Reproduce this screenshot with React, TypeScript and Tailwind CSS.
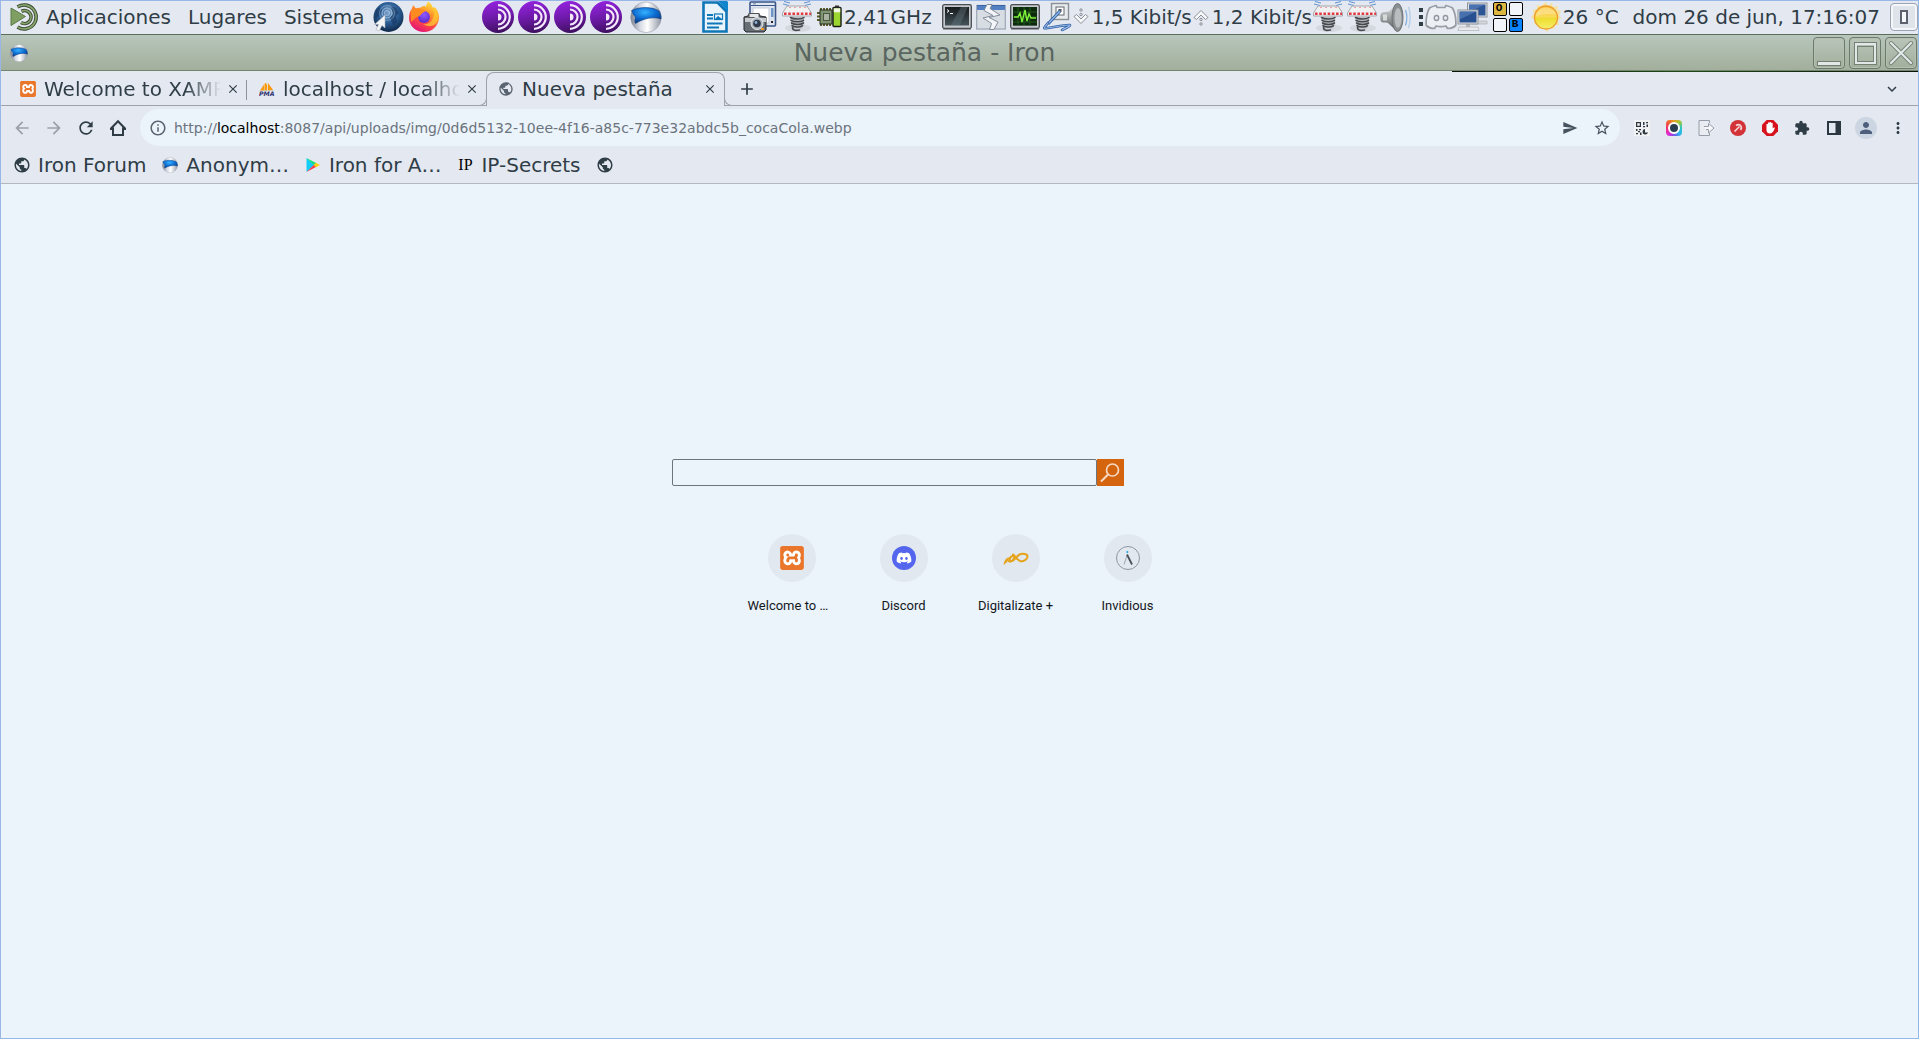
import type { ReactNode } from "react";
import {
  MdAdd,
  MdArrowBack,
  MdArrowForward,
  MdClose,
  MdExtension,
  MdInfoOutline,
  MdKeyboardArrowDown,
  MdMoreVert,
  MdPerson,
  MdPublic,
  MdRefresh,
  MdSend,
  MdStarBorder,
} from "react-icons/md";
import { SiXampp } from "react-icons/si";
import { FaDiscord } from "react-icons/fa";

/* ---------- panel icons ---------- */

function MateLogo() {
  return (
    <svg width="30" height="30" viewBox="0 0 30 30" fill="none">
      <path d="M6.500 5A12 12 0 1 1 6.500 25" transform="translate(1 0)" stroke="#3c4a36" strokeWidth="3.600" />
      <path d="M6.500 5A12 12 0 1 1 6.500 25" transform="translate(1 0)" stroke="#87a56b" strokeWidth="1.700" />
      <path d="M11.500 9.300A6.500 6.500 0 1 1 11 20.500" stroke="#3c4a36" strokeWidth="3.600" />
      <path d="M11.500 9.300A6.500 6.500 0 1 1 11 20.500" stroke="#87a56b" strokeWidth="1.700" />
      <path d="M1 6l14.500 8.500L1 23.500z" fill="#7f9f62" stroke="#5d7a48" />
    </svg>
  );
}

function WebCursor() {
  return (
    <svg width="32" height="32" viewBox="0 0 32 32" fill="none">
      <defs>
        <radialGradient id="web" cx=".5" cy=".35" r=".65">
          <stop offset="0" stopColor="#7ba3cc" />
          <stop offset=".5" stopColor="#2c5f96" />
          <stop offset="1" stopColor="#0d2748" />
        </radialGradient>
      </defs>
      <circle cx="16.500" cy="16" r="15" fill="url(#web)" />
      <path d="M19 5l5 2 3 5-3 3 1 6-4 3-3-7 3-4zM4 9l4-3 2 4-3 5-4 2z" fill="#16365f" opacity=".6" />
      <g stroke="#c4daf0" opacity=".6">
        <circle cx="15" cy="12" r="2.500" />
        <circle cx="15" cy="12" r="5" />
        <circle cx="15" cy="12" r="7.500" opacity=".6" />
      </g>
      <path d="M13 14v13l-3-2.500-3 5.500-3-1.500 2.500-5H2.500z" fill="#f3f4f6" stroke="#a9afb8" strokeWidth=".6" />
    </svg>
  );
}

function Firefox() {
  return (
    <svg width="32" height="32" viewBox="0 0 32 32">
      <defs>
        <linearGradient id="ff1" x1=".8" y1="0" x2=".3" y2="1">
          <stop offset="0" stopColor="#fff04a" />
          <stop offset=".35" stopColor="#ff9a28" />
          <stop offset=".65" stopColor="#ff4a45" />
          <stop offset="1" stopColor="#e0107a" />
        </linearGradient>
        <radialGradient id="ff2" cx=".5" cy=".3" r=".7">
          <stop offset="0" stopColor="#9059ff" />
          <stop offset="1" stopColor="#592acb" />
        </radialGradient>
      </defs>
      <path d="M20 .5c3 2 4 4 4.500 6 1.500.2 2.500-.5 3 .5 2.500 3 3.700 6 3.500 10-.5 8-7 14-15 14S1 25 1 17C1 13 2 10 4 7.500L5 4l3 3.500c1-.6 3-.8 4-.5 1.500-1.500 3-2 4.500-2.500l1 1.500z" fill="url(#ff1)" />
      <circle cx="16" cy="16" r="6" fill="url(#ff2)" />
      <path d="M3 9l5-1.500c2.500.3 4.500.5 5.500 2 2-.5 4-.3 4 0-.6 1.400-3 2-4 3.500-1.500 2-4 3.500-5 3L3 21z" fill="#ff8a20" />
      <path d="M20 1c5 5 8 10 5 16-2 5-6 7-10 6 6 4 13 2 15-4 1-5-1-10-5-12C24 4 22 2 20 1z" fill="#ffc832" opacity=".75" />
    </svg>
  );
}

function Tor() {
  return (
    <svg width="32" height="32" viewBox="0 0 32 32" fill="none">
      <defs>
        <linearGradient id="tor" x1=".4" y1="0" x2=".6" y2="1">
          <stop offset="0" stopColor="#9322dd" />
          <stop offset=".5" stopColor="#6d1aa8" />
          <stop offset="1" stopColor="#3c0f5c" />
        </linearGradient>
      </defs>
      <circle cx="16" cy="16" r="16" fill="url(#tor)" />
      <g stroke="#f4e8fb" strokeWidth="2.200">
        <path d="M16 4.200a11.800 11.800 0 0 1 0 23.600" />
        <path d="M16 8.500a7.500 7.500 0 0 1 0 15" />
      </g>
      <path d="M16 12.500a3.500 3.500 0 0 1 0 7z" fill="#f4e8fb" />
    </svg>
  );
}

function IronBall({ size }: { size: number }) {
  return (
    <svg width={size} height={size} viewBox="0 0 32 32">
      <defs>
        <linearGradient id="ironG" x1="0" y1="0" x2="1" y2="0">
          <stop offset="0" stopColor="#7d838f" />
          <stop offset=".3" stopColor="#d5d9e2" />
          <stop offset=".55" stopColor="#ffffff" />
          <stop offset="1" stopColor="#8f96a4" />
        </linearGradient>
        <radialGradient id="ironB" cx=".45" cy=".3" r=".7">
          <stop offset="0" stopColor="#35b1ff" />
          <stop offset=".55" stopColor="#0c6bd0" />
          <stop offset="1" stopColor="#0a3c86" />
        </radialGradient>
      </defs>
      <circle cx="16" cy="16.300" r="15.300" fill="url(#ironG)" stroke="#8c93a1" strokeWidth=".5" />
      <path d="M1.500 9.500C9 5.500 23 5.500 29 10c1.500 2.500 2.200 5 2 8-7-2.500-17-1-25.500 4.500-1.500-2-.2-4.500 0-6.500C4 14.500 2.500 12 1.500 9.500z" fill="url(#ironB)" stroke="#123f7c" strokeWidth=".6" />
    </svg>
  );
}

function Writer() {
  return (
    <svg width="28" height="32" viewBox="0 0 28 32" fill="none">
      <path d="M2.500 1.500h14l9 9v20h-23z" fill="#e9f4fc" stroke="#0f76b8" strokeWidth="2.600" />
      <path d="M17 0l10 11V1c-1-1-1-1-2-1z" fill="#1286cc" />
      <path d="M6 14h6M6 17.500h6M6 22.500h15.500M6 26.500h12" stroke="#0f76b8" strokeWidth="2" />
      <rect x="13.500" y="13" width="8" height="5.500" stroke="#0f76b8" strokeWidth="1.200" />
      <path d="M14 18l3-3 4 3z" fill="#0f76b8" />
    </svg>
  );
}

function Screenshot() {
  return (
    <svg width="34" height="32" viewBox="0 0 34 32" fill="none">
      <rect x="7" y="1" width="25.500" height="24" rx="1" fill="#dfe5ef" stroke="#3b5687" strokeWidth="1.600" />
      <path d="M8 4.500h24" stroke="#3b5687" />
      <path d="M10 2.800h3" stroke="#778aa9" />
      <rect x="10" y="7" width="16" height="15" fill="#fff" stroke="#c5ccd8" />
      <rect x="28" y="7" width="2.500" height="9" fill="#6e95c8" />
      <path d="M29 20v2" stroke="#222" strokeWidth="2" />
      <path d="M1 16l4-1 1-2h10l1 2 6 1v13l-2 2H3l-2-2z" fill="#686e75" stroke="#25292d" />
      <path d="M2 17h21v4H2z" fill="#c6cacf" />
      <rect x="6" y="12.500" width="10" height="4" fill="#e4e8eb" stroke="#555" />
      <circle cx="14" cy="22.500" r="6" fill="#aeb5bd" stroke="#e8edf0" />
      <circle cx="14" cy="22.500" r="3.800" fill="#2f3b4b" />
      <circle cx="13" cy="21.500" r="1.400" fill="#8fb2da" />
      <path d="M18 28h3" stroke="#ef9b2a" strokeWidth="2" />
    </svg>
  );
}

function Spring() {
  return (
    <svg width="32" height="32" viewBox="0 0 32 32" fill="none">
      <ellipse cx="17" cy="27" rx="13" ry="4" fill="#c9cdd3" opacity=".6" />
      <path d="M3 .5l6 1.500M2 3l6 1.500M29 .5l-6 1.500M30 3l-6 1.500" stroke="#5f92cf" />
      <path d="M6 5h20l4.500 7v3H1.500v-3z" fill="#f1f1f2" stroke="#a5a8ad" />
      <path d="M3 12.800h27" stroke="#e03a44" strokeWidth="2.400" strokeDasharray="2.600 1.600" />
      <path d="M8 6.500h18" stroke="#eca3a8" strokeDasharray="2 3" />
      <path d="M10 15.500h13v7l-2 5H12l-2-5z" fill="#b9bdc1" />
      <g stroke="#45494d" strokeWidth="1.600" strokeLinecap="round">
        <path d="M9.500 16.500c3 2 11 2 13.500 0" />
        <path d="M10 19.300c3 2 10 2 12.500 0" />
        <path d="M10.500 22c3 2 9 2 12 0" />
        <path d="M11 24.700c3 1.800 8 1.800 10.500 0" />
        <path d="M11.500 26.500c0 3.500 4 3 7 2.500" />
      </g>
    </svg>
  );
}

function Cpu() {
  return (
    <svg width="25" height="24" viewBox="0 0 25 24" fill="none">
      <path d="M4 3v18M7 3v18M10 3v18M13 3v18M0 8h4M0 11.500h4M0 15h4" stroke="#5a5c2a" strokeWidth="2" />
      <rect x="3" y="5" width="12" height="14" fill="#7f9470" stroke="#2a3023" />
      <rect x="6.500" y="8.500" width="6" height="7" fill="#a9b39f" stroke="#4b5544" />
      <rect x="16" y="2.500" width="8" height="19" rx="1" fill="#9bd52f" stroke="#161a12" strokeWidth="1.400" />
      <path d="M16.800 3.300h6.400v4h-6.400z" fill="#f1f7e2" />
      <path d="M18 1.500h4" stroke="#333" strokeWidth="2" />
    </svg>
  );
}

function Screen({ children }: { children: ReactNode }) {
  return (
    <svg width="30" height="26" viewBox="0 0 30 26" fill="none">
      <defs>
        <linearGradient id="scr" x1="0" y1="0" x2="0" y2="1">
          <stop offset="0" stopColor="#16191c" />
          <stop offset="1" stopColor="#44545a" />
        </linearGradient>
      </defs>
      <rect x="1" y="24" width="28" height="2" fill="#9da0a6" />
      <rect x=".7" y=".7" width="28.600" height="23.600" rx="1.500" fill="#c5c8cc" stroke="#494d52" strokeWidth="1.300" />
      <rect x="3" y="3" width="24" height="18.500" fill="url(#scr)" />
      {children}
    </svg>
  );
}

function TornWindow() {
  return (
    <svg width="30" height="26" viewBox="0 0 30 26" fill="none">
      <rect x=".7" y="1.500" width="28.600" height="23.500" fill="#d8dde4" stroke="#9ca5b4" strokeWidth="1.200" />
      <rect x="1" y="1.500" width="28" height="4.500" fill="#5380c2" />
      <path d="M1 1.500h28" stroke="#3a63a6" />
      <path d="M11 .5L8 6.500l9 5-10 2.500 8.500 5.500-2 6h4.500l4-7.500-9-4.500 11-2.500-10-6.500 2-4z" fill="#f3f5f9" stroke="#858d9a" />
    </svg>
  );
}

function Plug() {
  return (
    <svg width="30" height="31" viewBox="0 0 30 31" fill="none">
      <rect x="9.500" y="2.500" width="17" height="16" fill="#e8ebee" stroke="#8b9097" strokeWidth="1.400" />
      <rect x="14" y="6" width="8" height="8" fill="#fff" stroke="#62676d" />
      <rect x="16.500" y="8" width="3" height="3" fill="#53575c" />
      <path d="M18 10L6 23" stroke="#2f5ea3" strokeWidth="3.200" />
      <path d="M18 10L6 23" stroke="#8db5e4" strokeWidth="1.400" />
      <path d="M6 22C2 27 0 28 6 27c7-1 16-3 21-3 3 0-1 2-7 5" stroke="#2f5ea3" strokeWidth="2.600" strokeLinecap="round" />
      <path d="M6 22C2 27 0 28 6 27c7-1 16-3 21-3 3 0-1 2-7 5" stroke="#92b8e6" strokeWidth="1.200" strokeLinecap="round" />
    </svg>
  );
}

function NetArrow({ up }: { up?: boolean }) {
  return (
    <svg width="16" height="18" viewBox="0 0 16 18" fill="none" stroke="#8b9097">
      <g transform={up ? "rotate(180 8 9)" : undefined}>
        <path d="M1 8.500L3.500 6.500 8 11l4.500-4.500L15 8.500l-7 7z" fill="#f7f8fa" />
        <circle cx="8" cy="2" r="1.200" />
        <circle cx="8" cy="6.500" r="1.200" />
      </g>
    </svg>
  );
}

function Speaker() {
  return (
    <svg width="32" height="32" viewBox="0 0 32 32" fill="none">
      <defs>
        <linearGradient id="spk" x1="0" y1="0" x2="0" y2="1">
          <stop offset="0" stopColor="#e2e5e6" />
          <stop offset=".5" stopColor="#9da2a3" />
          <stop offset="1" stopColor="#505455" />
        </linearGradient>
      </defs>
      <path d="M1 12.500c1-1.500 6-1.500 8-2L17 2.500v28L8 22c-2-.5-6 0-7-1.500-1-2-1-6 0-8z" fill="url(#spk)" />
      <ellipse cx="17.500" cy="16.500" rx="5.500" ry="14" fill="#8b9092" stroke="#6d7173" />
      <ellipse cx="18" cy="17" rx="3.500" ry="10" fill="#b9bdbf" />
      <path d="M3 13.500h4v6H3z" fill="#e5e8e9" opacity=".8" />
      <path d="M25.500 9c1.500 4 1.500 11 0 15.500" stroke="#86b0de" strokeWidth="1.300" />
      <path d="M28.500 6c2.200 6 2.200 15 0 21" stroke="#b2cdea" strokeWidth="1.300" />
    </svg>
  );
}

function PanelDiscord() {
  return (
    <svg width="32" height="26" viewBox="0 0 32 26" fill="none">
      <path d="M11 1.500C7 2.500 4.500 4 4.500 4 1.500 9.500.8 15 1.200 21.500 4 24 7.500 24.500 9.500 24.500l1.500-2.500c3 .8 7 .8 10 0l1.500 2.500c2 0 5.500-.5 8.300-3C31.200 15 30.500 9.500 27.500 4c0 0-2.500-1.500-6.500-2.500l-1.200 2h-7.600z" fill="#eceff4" stroke="#989ca4" strokeWidth="1.700" strokeLinejoin="round" />
      <ellipse cx="11.500" cy="14" rx="2.200" ry="2.500" stroke="#92969f" strokeWidth="1.400" />
      <ellipse cx="20.500" cy="14" rx="2.200" ry="2.500" stroke="#92969f" strokeWidth="1.400" />
    </svg>
  );
}

function NetworkPcs() {
  return (
    <svg width="32" height="30" viewBox="0 0 32 30" fill="none">
      <path d="M14 19h16v3H14z" fill="#d3d6da" stroke="#a5a8ac" strokeWidth=".6" />
      <rect x="10.500" y="1" width="19.500" height="14" fill="#dfe2e6" stroke="#8e939a" />
      <rect x="12" y="2.500" width="16.500" height="11" fill="#2c5596" />
      <path d="M12 2.500h16.500L12 10z" fill="#5e86bf" opacity=".6" />
      <path d="M9 21h4v4H9z" fill="#b5b9be" />
      <path d="M2 25h19l1 3.500H1z" fill="#e7e9eb" stroke="#a5a8ac" strokeWidth=".6" />
      <rect x="1" y="8" width="20" height="14" fill="#dfe2e6" stroke="#8e939a" />
      <rect x="2.500" y="9.500" width="17" height="11" fill="#26508f" />
      <path d="M2.500 9.500h17l-17 8z" fill="#5e86bf" opacity=".6" />
    </svg>
  );
}

function Sun() {
  return (
    <svg width="30" height="30" viewBox="0 0 30 30">
      <defs>
        <linearGradient id="sun" x1="0" y1="0" x2="0" y2="1">
          <stop offset="0" stopColor="#f8ba2b" />
          <stop offset=".45" stopColor="#fbd95a" />
          <stop offset=".55" stopColor="#eedd30" />
          <stop offset="1" stopColor="#f6f06a" />
        </linearGradient>
      </defs>
      <path d="M15 0l2 4 4-3 1 4 5-1-1 4 4 1-2 4 2 3-3 2 1 5-4 0-1 4-4-1-3 4-3-4-5 1-1-4-4-1 1-4-4-3 3-3-1-4 4-1 0-4 4 1z" fill="#f8df8c" opacity=".85" />
      <circle cx="15" cy="15.500" r="11.500" fill="url(#sun)" stroke="#eb9d33" strokeWidth="1.300" />
      <path d="M5 14C6 8 10 5.500 15 5.500s9 3 10 7c-5-1-13-1-20 1.500z" fill="#fdeaa6" opacity=".6" />
    </svg>
  );
}

/* ---------- browser icons ---------- */

function PhpMyAdmin() {
  return (
    <svg width="18" height="18" viewBox="0 0 18 18">
      <path d="M1 11L6 3.500V11zM6.500 11V2.500C9 1 9.500 6 9 11zM10 11V2l6 8.500z" fill="#f89c0e" />
      <path d="M1 11l15-.5v.8H1z" fill="#c9cbd3" />
      <text x="0" y="17" fontFamily="DejaVu Sans" fontSize="7" fontWeight="bold" fontStyle="italic" fill="#2f3470">
        PMA
      </text>
    </svg>
  );
}

function HomeIcon() {
  return (
    <svg width="18" height="18" viewBox="0 0 18 18" fill="none" stroke="#2f3b45" strokeWidth="2">
      <path d="M1.500 10L9 2.200l7.500 7.800M4 8.500V16h10V8.500" />
      <path d="M1 10h3M14 10h3" />
    </svg>
  );
}

function PlayStore() {
  return (
    <svg width="16" height="16" viewBox="0 0 16 16">
      <path d="M1.500 1v14L9 8z" fill="#12cdf8" />
      <path d="M1.500 1l10 5.300L9 8.300z" fill="#11dd77" />
      <path d="M1.500 15l10-5.300L9 7.700z" fill="#fb3d4c" />
      <path d="M11 5.800L15 8l-4 2.200L8.700 8z" fill="#fdd012" />
    </svg>
  );
}

function QrIcon() {
  return (
    <svg width="16" height="16" viewBox="0 0 16 16" fill="#2d3740">
      <rect width="16" height="16" fill="#f1f2f4" />
      <path fillRule="evenodd" d="M2 2h5v5H2zm1.200 1.200v2.600h2.600V3.200z" />
      <path d="M9 2h1.500v3H9zM12 2h2v1.200h-2zM12.500 4.500H14V7h-1.500zM9 6h2v1.200H9zM2 9h1.500v2H2zM5 9h2v1.200H5zM4 11h2v1.200H4zM2 13h2v1.200H2zM6 12.500h1.500V15H6z" />
      <path d="M11 9a2.800 2.800 0 1 0 3 3.500h-3z" />
    </svg>
  );
}

function ColorLens() {
  return (
    <span className="flex size-4 items-center justify-center rounded-sm bg-[conic-gradient(#e9a020,#9ec93a,#28c4c4,#2bb6f0,#7a54e8,#e42bd0,#f03070,#f06030,#e9a020)]">
      <span className="flex size-3 items-center justify-center rounded-full border-2 border-white bg-[#2b3e50]" />
    </span>
  );
}

function PageArrow() {
  return (
    <svg width="17" height="16" viewBox="0 0 17 16" fill="none" stroke="#969da8">
      <path d="M11.500 3V.5H1v15h10.500V13" fill="#e9ecf0" />
      <path d="M6 6.500h4.500v-3L16 8l-5.500 5V9.500H8" fill="#f7f8f9" />
    </svg>
  );
}

function RedArrow() {
  return (
    <svg width="16" height="16" viewBox="0 0 16 16" fill="none">
      <circle cx="8" cy="8" r="8" fill="#d23338" />
      <path d="M4.500 11.500L9.500 6.500M6 5.500c1.500-1 3.500-1 4.500 0s1 3 0 4.500" stroke="#f6d6d7" strokeWidth="1.600" />
    </svg>
  );
}

function AdBlock() {
  return (
    <svg width="16" height="16" viewBox="0 0 16 16">
      <path d="M4.700 0h6.600L16 4.700v6.600L11.300 16H4.700L0 11.300V4.700z" fill="#d8121c" />
      <path d="M4.500 8.500V4.300c0-.9 1.500-.9 1.500 0V3c0-.9 1.600-.9 1.600 0v-.4c0-.9 1.600-.9 1.600 0V3.500c0-.9 1.500-.9 1.500 0v5c.6-.8 1.100-1.400 1.900-.9.500.3.200.8-.2 1.500-1 2.400-1.800 4.400-4.200 4.400C5.600 13.500 4.500 12 4.500 10z" fill="#fff" />
    </svg>
  );
}

function SidePanel() {
  return (
    <svg width="14" height="14" viewBox="0 0 14 14" fill="none">
      <rect x="1" y="1" width="12" height="12" stroke="#2b3842" strokeWidth="2" />
      <rect x="8.500" y="1" width="5" height="12" fill="#2b3842" />
    </svg>
  );
}

function Digitalizate() {
  return (
    <svg width="26" height="24" viewBox="0 0 26 24" fill="none" stroke="#e6a41d" strokeLinecap="round">
      <path d="M10 8.500c2 1 4 5.500 7 6.500 3.500 1 7.500-2 7.500-4.500S20 7 17 8.200c-2.500 1-4.500 5-7 6.300-2 1-3.500 0-3.300-1.500.3-1.800 2.500-3.500 4-3 1 .3.800 2-.5 3.300" strokeWidth="2" />
      <path d="M6.500 12C4 12 1.800 14.500 1.500 17.500c1.500-1 3-2.800 3.500-4.500 0 1.500.5 3 2.500 3" strokeWidth="1.400" />
    </svg>
  );
}

function InvidiousLogo() {
  return (
    <svg width="26" height="26" viewBox="0 0 26 26" fill="none">
      <circle cx="13" cy="13" r="11.500" stroke="#9097a0" />
      <circle cx="12.300" cy="7" r="1" fill="#1aa5e0" />
      <path d="M12.200 10L9 19.500" stroke="#a0a6ad" />
      <path d="M12 9.500l5 10" stroke="#4b5157" strokeWidth="1.800" />
    </svg>
  );
}

function XamppLogo({ large }: { large?: boolean }) {
  return (
    <span className={large ? "flex size-6 items-center justify-center rounded-xs bg-white" : "flex size-4 items-center justify-center rounded-xs bg-white"}>
      <SiXampp className="size-full text-[#e9762b]" />
    </span>
  );
}

/* ---------- pieces ---------- */

const iconButton = "flex w-8 shrink-0 items-center justify-center";

function WindowButton({ label, children }: { label: string; children: ReactNode }) {
  return (
    <button aria-label={label} className="flex size-8 items-center justify-center rounded border border-[#6b7a6c] bg-linear-to-b from-[#b9c5ba] to-[#a2af9c] shadow-[inset_0_0_0_1px_#b5c0b2]">
      {children}
    </button>
  );
}

function Tab({ icon, title, active, divider, faded }: { icon: ReactNode; title: string; active?: boolean; divider?: boolean; faded?: boolean }) {
  return (
    <div
      className={
        active
          ? "relative z-10 -mb-px flex w-[239px] items-center rounded-t-lg border border-b-0 border-[#9ea2ab] bg-[#e4e8f0] pr-1.5 pb-0.5 pl-[11px]"
          : "relative flex w-[239px] items-center pr-1.5 pl-3"
      }
    >
      {active && (
        <>
          <span className="absolute -left-2 bottom-0 size-2 rounded-br-lg border-r border-b border-[#9ea2ab] bg-[#e4e8f0]" />
          <span className="absolute -right-2 bottom-0 size-2 rounded-bl-lg border-b border-l border-[#9ea2ab] bg-[#e4e8f0]" />
        </>
      )}
      <button className="flex min-w-0 flex-1 items-center gap-2">
        <span className="flex size-4 shrink-0 items-center justify-center">{icon}</span>
        <span
          className={
            faded
              ? "flex-1 overflow-hidden text-left whitespace-nowrap [mask-image:linear-gradient(to_right,#000_80%,transparent)]"
              : "flex-1 overflow-hidden text-left whitespace-nowrap"
          }
        >
          {title}
        </span>
      </button>
      <button aria-label="Cerrar" className="ml-1 flex size-4 items-center justify-center">
        <MdClose className="size-3.5" />
      </button>
      {divider && <span className="absolute top-2 right-0 h-5 w-px bg-[#8e949d]" />}
    </div>
  );
}

function Bookmark({ icon, label }: { icon: ReactNode; label?: string }) {
  return (
    <a href="#" aria-label={label ?? "Marcador"} className="flex items-center gap-2">
      <span className="flex size-4 items-center justify-center">{icon}</span>
      {label && <span>{label}</span>}
    </a>
  );
}

function Shortcut({ icon, label }: { icon: ReactNode; label: string }) {
  return (
    <a href="#" className="flex w-28 flex-col items-center gap-4">
      <span className="flex size-12 items-center justify-center rounded-full bg-[#e1e8ef]">{icon}</span>
      <span
        className={
          label.endsWith("…")
            ? "w-22 text-left font-['Roboto',sans-serif] text-[13px] leading-4 text-[#14181c]"
            : "font-['Roboto',sans-serif] text-[13px] leading-4 text-[#14181c]"
        }
      >
        {label}
      </span>
    </a>
  );
}

export default function App() {
  return (
    <div className="flex min-h-screen flex-col border border-[#98b7e6] bg-[#ebf3fb] font-['DejaVu_Sans',sans-serif] text-xl leading-6 text-[#2f3d47]">
      {/* Desktop panel */}
      <header className="flex h-[33px] items-center overflow-hidden bg-[#e4e8f0] pb-0.5 whitespace-nowrap">
        <nav className="flex items-center gap-[17px] pl-[9px]">
          <button className="flex items-center gap-1.5">
            <MateLogo />
            Aplicaciones
          </button>
          <button>Lugares</button>
          <button>Sistema</button>
        </nav>
        <div className="ml-2 flex items-center gap-1">
          <button aria-label="Navegador"><WebCursor /></button>
          <button aria-label="Firefox"><Firefox /></button>
        </div>
        <div className="ml-[42px] flex items-center gap-1">
          {[1, 2, 3, 4].map((n) => (
            <button key={n} aria-label={`Tor Browser ${n}`}><Tor /></button>
          ))}
          <button aria-label="Iron" className="ml-1"><IronBall size={32} /></button>
        </div>

        <div className="ml-auto flex items-center">
          <button aria-label="Writer" className="mr-3.5"><Writer /></button>
          <button aria-label="Captura de pantalla" className="mr-1"><Screenshot /></button>
          <button aria-label="Montar disco" className="mr-1"><Spring /></button>
          <Cpu />
          <span className="ml-0.5">2,41</span>
          <span className="ml-0.5">GHz</span>
          <div className="ml-2.5 flex items-center gap-1">
            <button aria-label="Terminal">
              <Screen>
                <path d="M19 3h7l-8 18h-9z" fill="#6a7b82" opacity=".4" />
                <path d="M5 5.500l2 1.500-2 1.500M8 9.500h3" stroke="#fff" />
              </Screen>
            </button>
            <button aria-label="Forzar cierre"><TornWindow /></button>
            <button aria-label="Monitor del sistema">
              <Screen>
                <rect x="3" y="3" width="24" height="18.500" fill="#0e2a0c" />
                <path d="M3 8h24M3 13h24M3 18h24M8 3v18M14 3v18M20 3v18" stroke="#205a1a" />
                <path d="M4 13h4l2-4 2 9 3-12 2 11 2-7 2 4h5" stroke="#7ff03a" strokeWidth="1.400" />
              </Screen>
            </button>
          </div>
          <button aria-label="Conexión" className="ml-0.5 mr-px"><Plug /></button>
          <NetArrow />
          <span className="ml-[3px] mr-px">1,5 Kibit/s</span>
          <NetArrow up />
          <span className="ml-[3px]">1,2 Kibit/s</span>
          <div className="flex items-center gap-0.5">
            <button aria-label="Montar disco 2"><Spring /></button>
            <button aria-label="Montar disco 3"><Spring /></button>
            <button aria-label="Volumen"><Speaker /></button>
          </div>
          <span className="ml-[7px] flex flex-col gap-[3px]">
            <span className="size-1 bg-[#2f3d47]" />
            <span className="size-1 bg-[#2f3d47]" />
            <span className="size-1 bg-[#2f3d47]" />
          </span>
          <button aria-label="Discord" className="ml-0.5"><PanelDiscord /></button>
          <button aria-label="Red"><NetworkPcs /></button>
          <div className="ml-1 grid grid-cols-2 gap-0.5 text-left font-['Liberation_Mono',monospace] text-[11px] leading-[10px] font-bold text-black">
            <button className="flex size-3.5 rounded-xs border border-black bg-[#dcb63f] pl-0.5">O</button>
            <button aria-label="Área 2" className="size-3.5 rounded-xs border border-black bg-[#f1f5fa]" />
            <button aria-label="Área 3" className="size-3.5 rounded-xs border border-black bg-[#f1f5fa]" />
            <button className="flex size-3.5 rounded-xs border border-black bg-[#0a84ff] pl-0.5">B</button>
          </div>
          <span className="ml-2 flex items-center gap-0.5"><Sun />26 °C</span>
          <button className="ml-3.5">dom 26 de jun, 17:16:07</button>
          <button aria-label="Mostrar escritorio" className="ml-2.5 flex size-7 items-center justify-center rounded-sm border border-[#9aa4b3] bg-[#dfe4ea] shadow-[inset_0_0_0_2px_#f4f6f9]">
            <span className="h-3.5 w-2 border-2 border-[#5b636c] bg-[#f7f8fa]" />
          </button>
        </div>
      </header>

      {/* Window title bar */}
      <div className="flex h-[37px] items-center border-y border-t-[#5b6e5e] border-b-[#74846f] bg-linear-to-b from-[#b8c6bc] to-[#a2af9c] pl-[9px]">
        <IronBall size={18} />
        <h1 className="flex-1 pl-2 text-center text-[25px] text-[#5a6560]">Nueva pestaña - Iron</h1>
        <div className="flex gap-1 pr-px">
          <WindowButton label="Minimizar">
            <svg width="30" height="30" viewBox="0 0 30 30"><rect x="3.500" y="23.500" width="23" height="4" fill="#e2e7e8" stroke="#748072" /></svg>
          </WindowButton>
          <WindowButton label="Maximizar">
            <svg width="30" height="30" viewBox="0 0 30 30" fill="none">
              <rect x="6" y="6" width="19" height="19" stroke="#e2e7e8" strokeWidth="2" />
              <rect x="4.500" y="4.500" width="22" height="22" stroke="#748072" />
              <rect x="7.500" y="8.500" width="16" height="15" stroke="#748072" />
            </svg>
          </WindowButton>
          <WindowButton label="Cerrar ventana">
            <svg width="30" height="30" viewBox="0 0 30 30" strokeLinecap="round">
              <path d="M5 5l20 20M25 5L5 25" stroke="#748072" strokeWidth="4" />
              <path d="M5 5l20 20M25 5L5 25" stroke="#e2e7e8" strokeWidth="2.300" />
            </svg>
          </WindowButton>
        </div>
      </div>

      {/* Tab strip */}
      <div className="relative flex h-[35px] border-b border-[#9ea2ab] bg-[#e4e8f0] pt-px pl-[7px]">
        <span className="absolute top-0 right-0 h-px w-[466px] bg-linear-to-r from-[#0a120a] via-[#1d4a16] to-[#0a120a]" />
        <Tab icon={<XamppLogo />} title="Welcome to XAMPP" divider faded />
        <Tab icon={<PhpMyAdmin />} title="localhost / localhost" faded />
        <Tab icon={<MdPublic className="size-[18px] text-[#59636f]" />} title="Nueva pestaña" active />
        <button aria-label="Pestaña nueva" className="ml-3 flex items-center">
          <MdAdd className="size-5" />
        </button>
        <button aria-label="Buscar pestañas" className="mr-[17px] ml-auto flex items-center">
          <MdKeyboardArrowDown className="size-[18px]" />
        </button>
      </div>

      {/* Toolbar */}
      <div className="flex h-[41px] items-stretch bg-[#e4e8f0] pt-[3px] pr-1 pb-px pl-[5px]">
        <button aria-label="Atrás" className={iconButton}><MdArrowBack className="size-5 text-[#9aa1aa]" /></button>
        <button aria-label="Adelante" className={iconButton}><MdArrowForward className="size-5 text-[#9aa1aa]" /></button>
        <button aria-label="Recargar" className={iconButton}><MdRefresh className="size-5" /></button>
        <button aria-label="Inicio" className={iconButton}><HomeIcon /></button>
        <div className="relative ml-1.5 flex flex-1 items-center rounded-full bg-[#ebf3fb] pr-0.5 pl-[9px]">
          <MdInfoOutline className="size-[18px] text-[#59636f]" />
          <label className="relative ml-[7px] flex-1 text-sm text-[#6b747d]">
            <input aria-label="Dirección" className="absolute inset-0 w-full bg-transparent outline-none" />
            http://<span className="text-black">localhost</span>:8087/api/uploads/img/0d6d5132-10ee-4f16-a85c-773e32abdc5b_cocaCola.webp
          </label>
          <button aria-label="Enviar" className={iconButton}><MdSend className="size-4 text-[#46525d]" /></button>
          <button aria-label="Añadir a marcadores" className={iconButton}><MdStarBorder className="size-[18px] text-[#46525d]" /></button>
        </div>
        <div className="ml-1.5 flex">
          <button aria-label="Código QR" className={iconButton}><QrIcon /></button>
          <button aria-label="Selector de color" className={iconButton}><ColorLens /></button>
          <button aria-label="Exportar página" className={iconButton}><PageArrow /></button>
          <button aria-label="Herramientas" className={iconButton}><RedArrow /></button>
          <button aria-label="Bloqueador" className={iconButton}><AdBlock /></button>
          <button aria-label="Extensiones" className={iconButton}><MdExtension className="size-4" /></button>
          <button aria-label="Panel lateral" className={iconButton}><SidePanel /></button>
          <button aria-label="Perfil" className={iconButton}>
            <span className="flex size-[22px] items-center justify-center rounded-full bg-[#ccd5e2]">
              <MdPerson className="size-[18px] text-[#4d5f7d]" />
            </span>
          </button>
          <button aria-label="Menú" className={iconButton}><MdMoreVert className="size-[18px]" /></button>
        </div>
      </div>

      {/* Bookmarks bar */}
      <nav className="flex h-[37px] items-center gap-4 border-b border-[#b3b8bd] bg-[#e4e8f0] pl-[13px]">
        <Bookmark icon={<MdPublic className="size-[18px] shrink-0" />} label="Iron Forum" />
        <Bookmark icon={<IronBall size={16} />} label="Anonym…" />
        <Bookmark icon={<PlayStore />} label="Iron for A…" />
        <Bookmark icon={<span className="font-['Liberation_Serif',serif] text-base leading-4 text-black">IP</span>} label="IP-Secrets" />
        <Bookmark icon={<MdPublic className="size-[18px] shrink-0" />} />
      </nav>

      {/* New tab page */}
      <main className="flex flex-1 flex-col items-center pt-[275px]">
        <form className="mr-[124px] flex h-[27px]" onSubmit={(e) => e.preventDefault()}>
          <input aria-label="Buscar" className="w-[425px] rounded-xs border border-[#6d747b] bg-transparent px-1 text-sm outline-none" />
          <button aria-label="Buscar" className="flex w-[27px] items-center justify-center bg-[#d5640f]">
            <svg width="20" height="20" viewBox="0 0 20 20" fill="none" stroke="#f6d9c3" strokeWidth="1.700">
              <circle cx="12.500" cy="7" r="6" />
              <path d="M8.300 11.200L1 18.500" strokeWidth="2" />
            </svg>
          </button>
        </form>
        <section className="mt-12 flex">
          <Shortcut icon={<XamppLogo large />} label="Welcome to …" />
          <Shortcut
            icon={
              <span className="flex size-6 items-center justify-center rounded-full bg-[#5466ee]">
                <FaDiscord className="size-4 text-white" />
              </span>
            }
            label="Discord"
          />
          <Shortcut icon={<Digitalizate />} label="Digitalizate +" />
          <Shortcut icon={<InvidiousLogo />} label="Invidious" />
        </section>
      </main>
    </div>
  );
}
